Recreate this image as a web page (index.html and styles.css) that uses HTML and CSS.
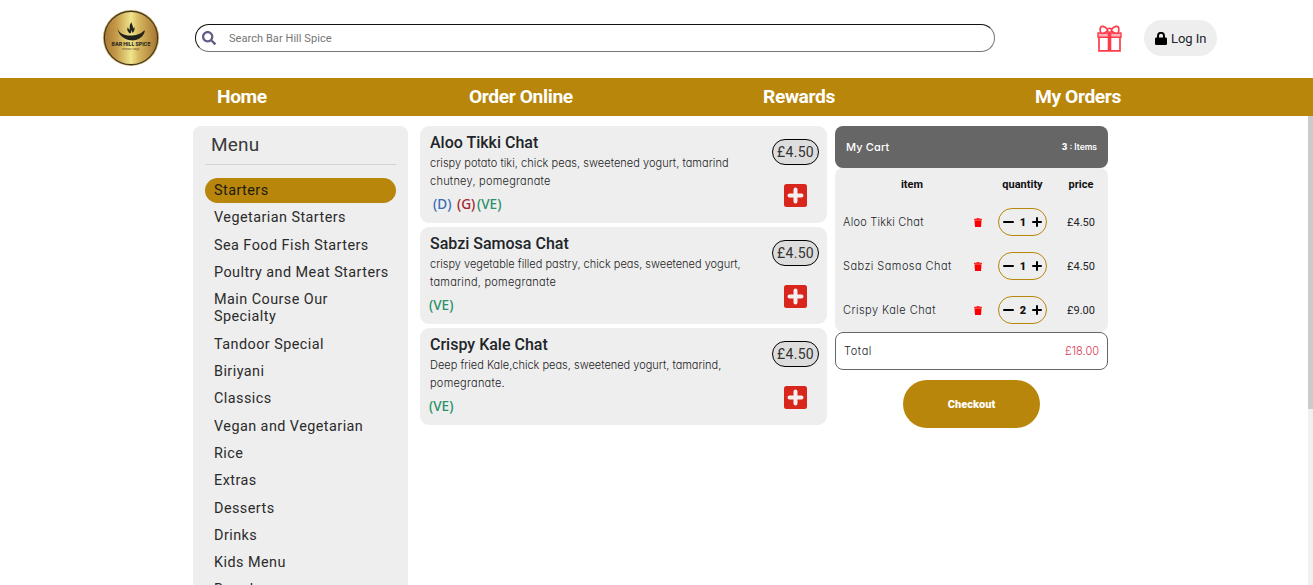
FILE: index.html
```html
<!DOCTYPE html>
<html lang="en">
<head>
<meta charset="utf-8">
<title>Bar Hill Spice</title>
<link rel="stylesheet" href="styles.css">
</head>
<body>
<svg class="defs" width="0" height="0">
  <symbol id="plus-box" viewBox="0 0 23 23"><rect width="23" height="23" rx="2.5" fill="#d9261c"/><path d="M11.5 5.5v12M5.5 11.5h12" stroke="#f3efef" stroke-width="4" stroke-linecap="round"/></symbol>
  <symbol id="trash" viewBox="0 0 8 9"><path d="M0 .8h2.3L2.8 0h2.4l.5.8H8v1.3H0z" fill="#ff2a2a"/><path d="M.5 2.3h7L7 9H1z" fill="red"/></symbol>
</svg>
<header class="top">
  <svg class="logo" width="58" height="58" viewBox="0 0 58 58">
    <defs><linearGradient id="gold"><stop offset="0" stop-color="#a97a36"/><stop offset=".22" stop-color="#c49a49"/><stop offset=".5" stop-color="#f0e58d"/><stop offset=".65" stop-color="#d6b65f"/><stop offset="1" stop-color="#a67430"/></linearGradient></defs>
    <circle cx="29" cy="29" r="28" fill="#c2a35c"/>
    <circle cx="29" cy="29" r="26.6" fill="url(#gold)" stroke="#3d3520" stroke-width="1.1"/>
    <path d="M15.500 18c0 4.500 4.500 7.800 10 8.400 6.500.7 13-1 16-4.400l1.500-.5c-1.500 7-8 10.800-15 9.800-6.500-1-12.500-6-12.500-13.300z" fill="#222419"/>
    <path d="M27.500 24.500c-1-2-3.500-3-1.500-6.500 0 1.500 1 2 1.500 3 1-2-1.200-3.500 2-8 0 3 2 3.500 1.500 6.500l1.500-1.500c.5 2.500-.5 5-2 6l-.8-3-.8 3z" fill="#222419"/>
    <text x="29" y="37.300" class="logo-name" text-anchor="middle" textLength="39" lengthAdjust="spacingAndGlyphs">BAR HILL SPICE</text>
    <text x="29" y="41.300" class="logo-tag" text-anchor="middle">Bombay Magic</text>
  </svg>
  <div class="search">
    <svg width="14" height="14" viewBox="0 0 512 512"><path fill="#5f5c86" d="M505 442.700L405.300 343c-4.500-4.500-10.600-7-17-7H372c27.600-35.300 44-79.700 44-128C416 93.100 322.900 0 208 0S0 93.100 0 208s93.100 208 208 208c48.300 0 92.700-16.400 128-44v16.300c0 6.400 2.500 12.500 7 17l99.700 99.700c9.400 9.400 24.600 9.400 33.900 0l28.300-28.300c9.400-9.400 9.400-24.600.1-34zM208 336c-70.700 0-128-57.200-128-128 0-70.700 57.200-128 128-128 70.700 0 128 57.200 128 128 0 70.700-57.200 128-128 128z"/></svg>
    <span>Search Bar Hill Spice</span>
  </div>
  <svg class="gift" width="25" height="27" viewBox="0 0 25 27" fill="none" stroke="#ff3b4b">
    <path d="M1 8h23v4.300H1z" stroke-width="1.400" fill="#ffb3ba"/>
    <path d="M2 12v13.800h21V12" stroke-width="1.700"/>
    <path d="M12.500 8v17.500" stroke-width="3.600"/>
    <path d="M10.500 4.500C8 1 4 .5 3.500 2.500S3 6.500 4 7.700s4 .3 6.500-1.700zM14.500 4.500C17 1 21 .5 21.500 2.500S22 6.500 21 7.700s-4 .3-6.500-1.700z" stroke-width="1.700" fill="#fff"/>
    <circle cx="12.500" cy="5.300" r="2" stroke-width="1.500" fill="#fff"/>
  </svg>
  <div class="login">
    <svg width="12" height="13" viewBox="0 0 12 13"><path d="M3 6V3.800a3 3 0 0 1 6 0V6" fill="none" stroke="#000" stroke-width="2"/><rect y="5.400" width="12" height="7.600" rx="1.300"/></svg>
    <span>Log In</span>
  </div>
</header>
<nav class="nav">
  <a class="n1">Home</a><a class="n2">Order Online</a><a class="n3">Rewards</a><a class="n4">My Orders</a>
</nav>
<main class="main">
  <aside class="menu">
    <h2>Menu</h2>
    <ul>
      <li class="active">Starters</li><li>Vegetarian Starters</li><li>Sea Food Fish Starters</li><li>Poultry and Meat Starters</li><li>Main Course Our Specialty</li><li>Tandoor Special</li><li>Biriyani</li><li>Classics</li><li>Vegan and Vegetarian</li><li>Rice</li><li>Extras</li><li>Desserts</li><li>Drinks</li><li>Kids Menu</li><li>Breads</li>
    </ul>
  </aside>
  <section class="dishes">
    <article class="dish">
      <div class="info"><h3>Aloo Tikki Chat</h3><p><span class="d1">crispy potato tiki, chick peas, sweetened yogurt, tamarind</span><br><span class="d2">chutney, pomegranate</span></p>
        <div class="tags three"><b class="d">(D)</b><b class="g">(G)</b><b class="ve">(VE)</b></div></div>
      <div class="buy"><span class="price">£4.50</span><svg width="23" height="23"><use href="#plus-box"/></svg></div>
    </article>
    <article class="dish">
      <div class="info"><h3>Sabzi Samosa Chat</h3><p><span>crispy vegetable filled pastry, chick peas, sweetened yogurt,</span><br><span class="d2">tamarind, pomegranate</span></p>
        <div class="tags"><b class="ve">(VE)</b></div></div>
      <div class="buy"><span class="price">£4.50</span><svg width="23" height="23"><use href="#plus-box"/></svg></div>
    </article>
    <article class="dish">
      <div class="info"><h3>Crispy Kale Chat</h3><p><span>Deep fried Kale,chick peas, sweetened yogurt, tamarind,</span><br><span class="d2">pomegranate.</span></p>
        <div class="tags"><b class="ve">(VE)</b></div></div>
      <div class="buy"><span class="price">£4.50</span><svg width="23" height="23"><use href="#plus-box"/></svg></div>
    </article>
  </section>
  <aside class="cart">
    <div class="cart-head"><span class="my">My Cart</span><span class="count"><b>3</b> : Items</span></div>
    <div class="cart-body">
      <div class="row head"><span>item</span><i></i><span>quantity</span><span>price</span></div>
      <div class="row"><span class="name">Aloo Tikki Chat</span><svg width="8" height="9"><use href="#trash"/></svg><div class="qty"><svg width="11" height="10"><path d="M1 5h9"/></svg><b>1</b><svg width="10" height="10"><path d="M1 5h8M5 1v8"/></svg></div><span class="amt">£4.50</span></div>
      <div class="row"><span class="name wide">Sabzi Samosa Chat</span><svg width="8" height="9"><use href="#trash"/></svg><div class="qty"><svg width="11" height="10"><path d="M1 5h9"/></svg><b>1</b><svg width="10" height="10"><path d="M1 5h8M5 1v8"/></svg></div><span class="amt">£4.50</span></div>
      <div class="row"><span class="name wide">Crispy Kale Chat</span><svg width="8" height="9"><use href="#trash"/></svg><div class="qty"><svg width="11" height="10"><path d="M1 5h9"/></svg><b>2</b><svg width="10" height="10"><path d="M1 5h8M5 1v8"/></svg></div><span class="amt">£9.00</span></div>
    </div>
    <div class="total"><span class="label">Total</span><span class="sum">£18.00</span></div>
    <div class="checkout">Checkout</div>
  </aside>
  <div class="scroll"><div class="thumb"></div></div>
</main>
</body>
</html>
```
FILE: styles.css
```css
* { box-sizing: border-box; margin: 0; padding: 0; }
body { width: 1313px; height: 585px; overflow: hidden; background: #fff; font-family: Roboto, sans-serif; color: #212529; display: flex; flex-direction: column; }
.defs { position: absolute; }
.top { height: 78px; flex: none; display: flex; align-items: center; padding-left: 102px; padding-bottom: 2px; }
.logo-name { font: 800 5px Inter, sans-serif; fill: #33301f; }
.logo-tag { font: 2.5px Inter, sans-serif; fill: #5c4a22; }
.search { width: 800px; height: 28px; margin-left: 35px; border: 1px solid #767676; border-top-color: #111; border-left-color: #111; border-radius: 14px; display: flex; align-items: center; padding-left: 6px; gap: 13px; font-size: 11px; letter-spacing: 0.06px; color: #757575; }
.gift { margin-left: 102px; }
.login { width: 73px; height: 36px; margin-left: 22px; border-radius: 18px; background: #eee; display: flex; align-items: center; padding-left: 11px; gap: 4px; font-size: 13px; letter-spacing: -0.05px; }
.nav { height: 38px; flex: none; background: #b8860b; color: #fff; font-size: 19.2px; line-height: 38px; font-weight: 700; letter-spacing: -0.38px; display: flex; padding-left: 217px; white-space: nowrap; }
.n1 { width: 252px; }
.n2 { width: 294px; }
.n3 { width: 272px; }
.main { flex: none; display: flex; align-items: flex-start; padding: 10px 0 0 193px; position: relative; height: 469px; }
.menu { width: 215px; height: 459px; overflow: hidden; background: #eee; border-radius: 8px 8px 0 0; padding: 0 12px; }
.menu h2 { height: 39px; border-bottom: 1px solid #d3d3d3; font-size: 19px; line-height: 37px; font-weight: 400; letter-spacing: 0.2px; padding-left: 6px; margin-bottom: 13px; color: #3a3a3a; }
.menu ul { list-style: none; }
.menu li { font-size: 14.4px; line-height: 17.3px; letter-spacing: 0.45px; padding: 4px 7px 4px 9px; margin-bottom: 2px; border-radius: 13px; color: #2b2b2b; }
.menu .active { background: #b8860b; color: #1c1a10; }
.dishes { width: 407px; margin-left: 12px; display: flex; flex-direction: column; gap: 4px; }
.dish { height: 97px; background: #eee; border-radius: 9px; display: flex; justify-content: space-between; padding: 0 8px 0 10px; }
.dish h3 { font-size: 16px; line-height: 20px; margin-top: 7px; font-weight: 500; letter-spacing: 0; }
.dish p { font: 300 11px/18px Inter, sans-serif; font-feature-settings: "cv11"; margin-top: 1px; white-space: nowrap; color: #222; height: 36px; }
.d1 { letter-spacing: 0.04px; }
.d2 { letter-spacing: 0.25px; }
.tags { display: flex; height: 16px; margin-top: 6px; font: 500 13.6px/16px "Noto Sans", sans-serif; margin-left: -1px; }
.tags b { font-weight: 500; }
.tags.three { margin-left: 3px; }
.d { color: #3a6fb5; width: 24px; }
.g { color: #a3272c; width: 20px; }
.ve { color: #2a9168; }
.buy { width: 47px; padding-top: 13px; display: flex; flex-direction: column; align-items: center; gap: 19px; }
.price { width: 47px; height: 26px; border: 1px solid #000; border-radius: 13px; background: #ddd; text-align: center; font-size: 14px; line-height: 25px; letter-spacing: 0.3px; color: #333; }
.cart { width: 273px; margin-left: 8px; display: flex; flex-direction: column; font-family: Inter, sans-serif; font-feature-settings: "cv11"; }
.cart-head { height: 42px; background: #666; border-radius: 8px; color: #fff; display: flex; justify-content: space-between; align-items: center; padding: 0 11px; }
.my { font-size: 11px; font-weight: 500; letter-spacing: 0.15px; }
.count { font-size: 8.5px; font-weight: 600; }
.count b { font-weight: 800; }
.cart-body { height: 164px; background: #eee; border-radius: 8px; }
.row { height: 44px; display: grid; grid-template-columns: 126px 18px 71px 46px; padding-left: 8px; align-items: center; justify-items: center; }
.row .name { justify-self: start; font-size: 11px; font-weight: 300; letter-spacing: 0.22px; white-space: nowrap; }
.row .wide { letter-spacing: 0.45px; }
.head { height: 32px; font: 700 11px Roboto, sans-serif; color: #111; }
.head > :first-child { margin-left: 12px; }
.qty { width: 49px; height: 28px; border: 1px solid #b8860b; border-radius: 14px; display: flex; align-items: center; justify-content: center; gap: 6px; font: 700 11px Roboto, sans-serif; color: #111; }
.qty path { stroke: #000; stroke-width: 2; fill: none; stroke-linecap: round; }
.amt { font: 400 11px Roboto, sans-serif; }
.total { height: 38px; border: 1px solid #666; border-radius: 8px; display: flex; justify-content: space-between; align-items: center; padding: 0 8px; font-size: 11px; font-weight: 300; }
.label { letter-spacing: 0.6px; }
.sum { color: #dc3550; }
.checkout { width: 137px; height: 48px; margin: 10px auto 0; border-radius: 24px; background: #b8860b; color: #fff; font: 900 11px/49px Roboto, sans-serif; text-align: center; }
.scroll { position: absolute; right: 0; top: 0; width: 5px; height: 469px; background: #f0f0f0; }
.thumb { height: 293px; background: #cbcbcb; }
```
